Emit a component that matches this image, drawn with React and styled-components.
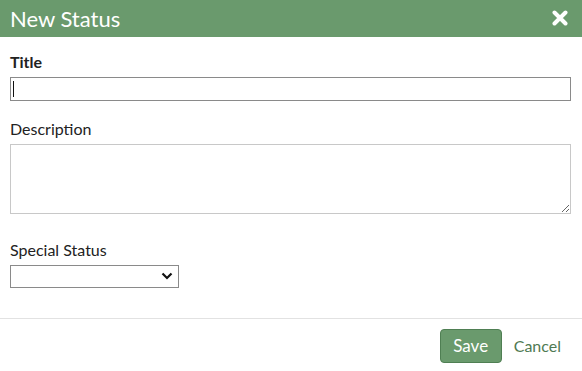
import React from "react";
import styled, { createGlobalStyle } from "styled-components";

const Global = createGlobalStyle`
  html, body { margin: 0; padding: 0; background: #fff; }
  body { font-family: "Lato", "Noto Sans", sans-serif; }
  * { box-sizing: border-box; }
`;

const Dialog = styled.div`
  width: 582px;
  height: 371px;
  display: flex;
  flex-direction: column;
  background: #fff;
`;

const Header = styled.div`
  height: 37px;
  background: #6a9a6d;
  display: flex;
  align-items: center;
  justify-content: space-between;
  padding: 0 14px 0 10px;
  color: #fff;
`;

const HeaderTitle = styled.h1`
  margin: 0;
  font-size: 22px;
  font-weight: 400;
  line-height: 1;
`;

const CloseBtn = styled.button`
  border: 0;
  background: none;
  padding: 0;
  display: flex;
  margin-top: -2px;
`;

const Body = styled.div`
  flex: 1;
  padding: 15px 11px 0 10px;
  display: flex;
  flex-direction: column;
`;

const Field = styled.div`
  display: flex;
  flex-direction: column;
  margin-bottom: ${(p) => p.$mb || 0}px;
`;

const Label = styled.label`
  font-size: 16px;
  font-weight: ${(p) => (p.$bold ? 700 : 400)};
  color: #222;
  line-height: 20px;
  margin-bottom: 5px;
`;

const InputWrap = styled.div`
  position: relative;
`;

const Input = styled.input`
  width: 561px;
  height: 24px;
  border: 1px solid #8a8a8a;
  outline: none;
  padding: 0 4px;
  font: inherit;
`;

const Caret = styled.span`
  position: absolute;
  left: 3px;
  top: 4px;
  width: 1px;
  height: 16px;
  background: #111;
`;

const TextArea = styled.textarea`
  width: 561px;
  height: 70px;
  border: 1px solid #c8c8c8;
  outline: none;
  font: inherit;
  display: block;
`;

const SelectWrap = styled.div`
  position: relative;
  width: 169px;
  height: 23px;
`;

const Select = styled.select`
  appearance: none;
  width: 100%;
  height: 100%;
  border: 1px solid #8a8a8a;
  background: #fff;
  outline: none;
  border-radius: 0;
`;

const Chevron = styled.svg`
  position: absolute;
  right: 6px;
  top: 7px;
  pointer-events: none;
`;

const Footer = styled.div`
  border-top: 1px solid #e2e2e2;
  height: 53px;
  display: flex;
  align-items: center;
  justify-content: flex-end;
  padding: 0 21px 0 0;
  gap: 12px;
`;

const SaveButton = styled.button`
  width: 62px;
  height: 34px;
  background: #6a9a6d;
  border: 1px solid #4f7f53;
  border-radius: 4px;
  color: #fff;
  font: inherit;
  font-size: 17px;
  margin-top: 1px;
`;

const CancelLink = styled.a`
  color: #4f7a52;
  font-size: 16px;
  text-decoration: none;
`;

export default function App() {
  return (
    <>
      <Global />
      <Dialog>
        <Header>
          <HeaderTitle>New Status</HeaderTitle>
          <CloseBtn aria-label="close">
            <svg width="16" height="16" viewBox="0 0 16 16">
              <path d="M2.5 2.5 L13.5 13.5 M13.5 2.5 L2.5 13.5" stroke="#fff" strokeWidth="4" strokeLinecap="round" />
            </svg>
          </CloseBtn>
        </Header>
        <Body>
          <Field $mb={18}>
            <Label $bold>Title</Label>
            <InputWrap>
              <Input />
              <Caret />
            </InputWrap>
          </Field>
          <Field $mb={26}>
            <Label>Description</Label>
            <TextArea />
          </Field>
          <Field>
            <Label>Special Status</Label>
            <SelectWrap>
              <Select>
                <option></option>
              </Select>
              <Chevron width="12" height="8" viewBox="0 0 12 8">
                <path d="M1.5 1.5 L6 6 L10.5 1.5" fill="none" stroke="#111" strokeWidth="2.2" />
              </Chevron>
            </SelectWrap>
          </Field>
        </Body>
        <Footer>
          <SaveButton>Save</SaveButton>
          <CancelLink href="#">Cancel</CancelLink>
        </Footer>
      </Dialog>
    </>
  );
}
